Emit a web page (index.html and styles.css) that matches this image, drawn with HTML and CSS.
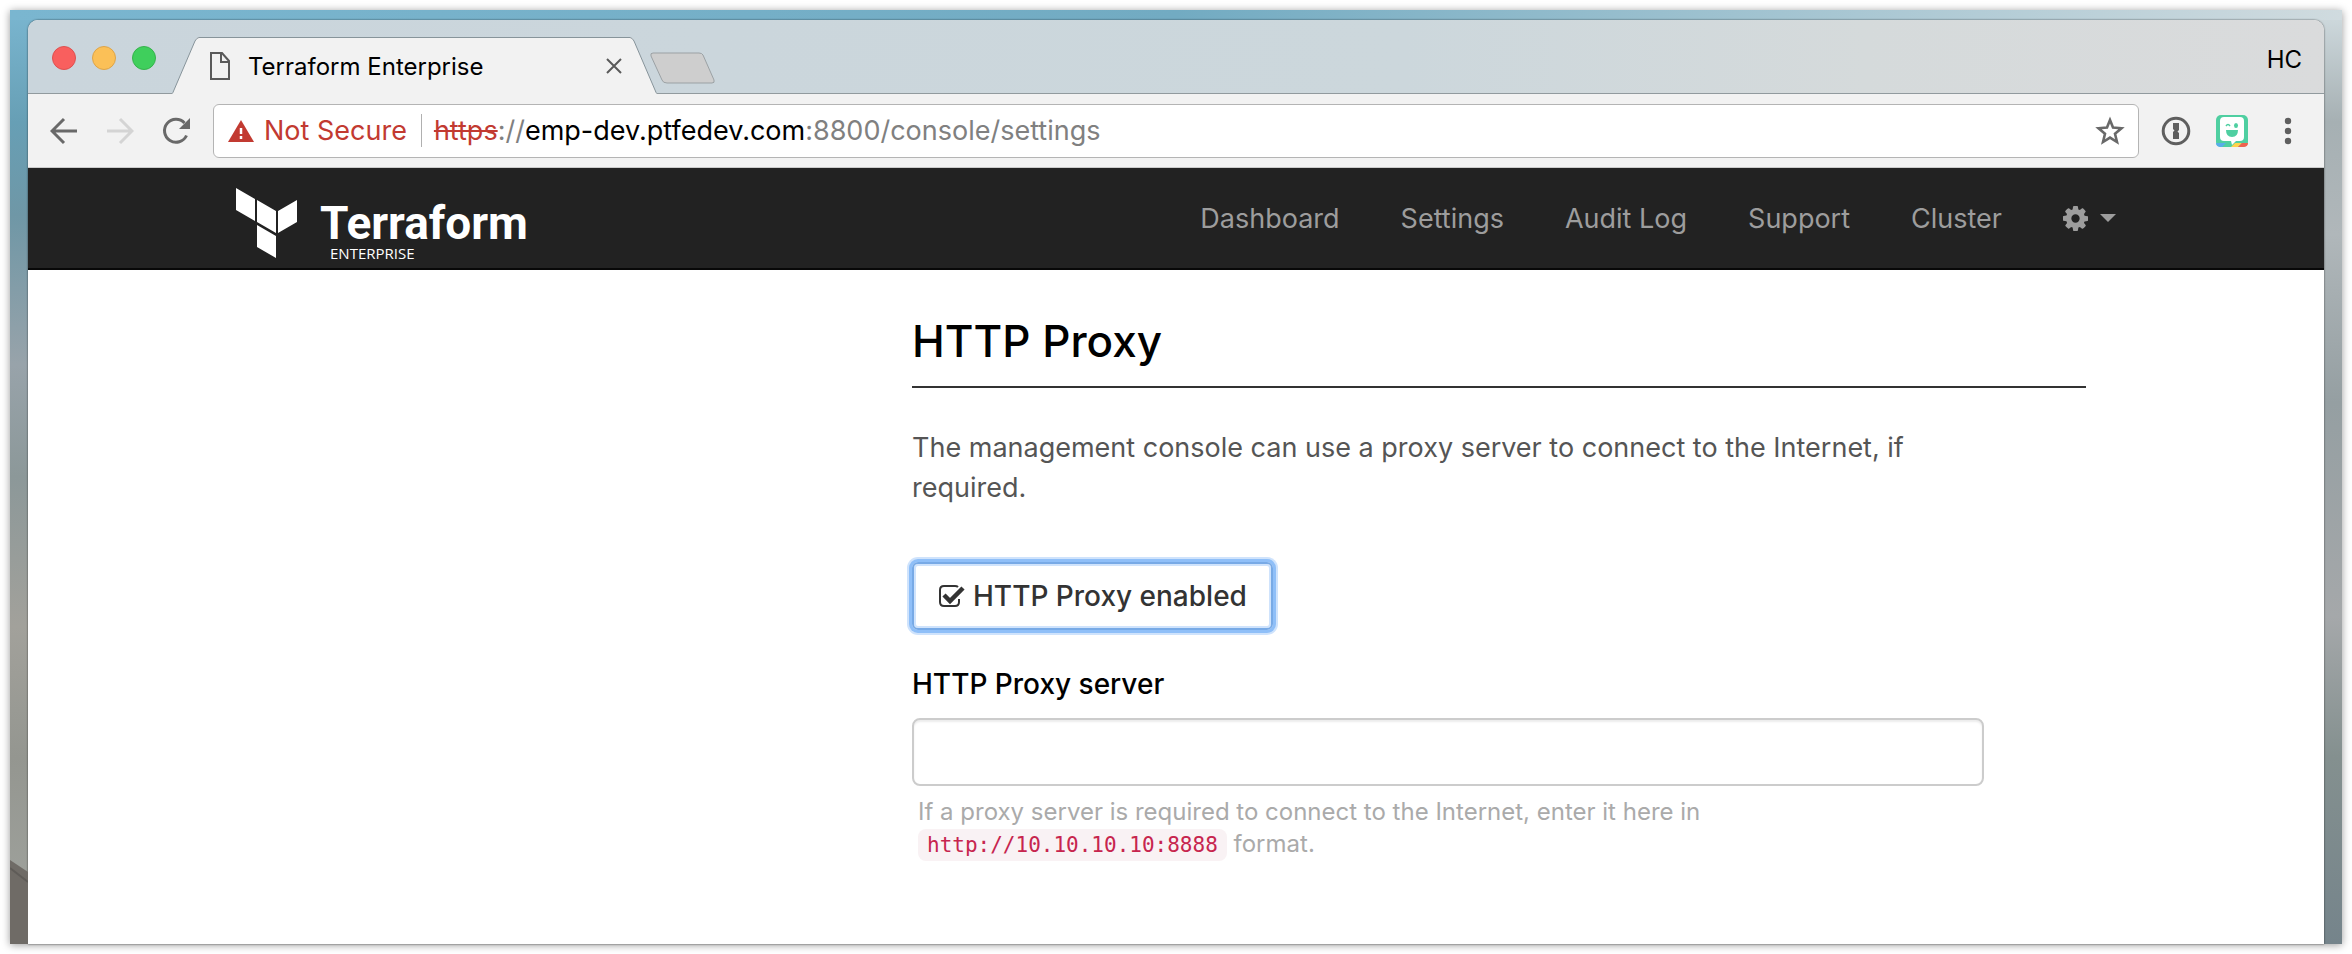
FILE: index.html
```html
<!DOCTYPE html>
<html lang="en">
<head>
<meta charset="utf-8">
<title>Terraform Enterprise</title>
<link rel="stylesheet" href="styles.css">
</head>
<body>
<div class="desktop">
  <svg class="rock" viewBox="0 0 18 84" aria-hidden="true"><path d="M0 0L18 12V84H0Z" fill="#6f6b66"/><path d="M0 8L18 22" stroke="#5f5c58" stroke-width="2"/></svg>
  <div class="window">
    <header class="tabstrip">
      <div class="lights">
        <button class="light close" aria-label="Close window"></button>
        <button class="light minimize" aria-label="Minimize window"></button>
        <button class="light expand" aria-label="Expand window"></button>
      </div>
      <div class="tab">
        <svg class="tab-edge" viewBox="0 0 27 57" aria-hidden="true"><path d="M0 57Q1 56 2 53L23 4Q25 0 27 0V57Z" fill="#f2f2f2"/><path d="M0 56.500Q1 56 2 53L23 4Q25 .5 27 .5" fill="none" stroke="#87949a"/></svg>
        <div class="tab-body">
          <svg width="20" height="28" viewBox="0 0 20 28" fill="none" stroke="#5a5a5a" stroke-width="2" aria-hidden="true"><path d="M1 1H12L19 9V27H1ZM11 1V10H19"/></svg>
          <span class="tab-title">Terraform Enterprise</span>
          <button class="icon-button" aria-label="Close tab"><svg width="16" height="16" viewBox="0 0 16 16" stroke="#5a5a5a" stroke-width="2" aria-hidden="true"><path d="M1 1L15 15M15 1L1 15"/></svg></button>
        </div>
        <svg class="tab-edge" viewBox="0 0 27 57" aria-hidden="true"><path d="M27 57Q26 56 25 53L4 4Q2 0 0 0V57Z" fill="#f2f2f2"/><path d="M27 56.500Q26 56 25 53L4 4Q2 .5 0 .5" fill="none" stroke="#87949a"/></svg>
      </div>
      <button class="new-tab" aria-label="New tab"><svg width="66" height="32" viewBox="0 0 66 32" aria-hidden="true"><path d="M3 1H49Q52 1 53 3L64 28Q65 31 62 31H17Q13 31 12 28L1 4Q0 1 3 1Z" fill="#cecece" stroke="#9ba1a4"/></svg></button>
      <button class="profile">HC</button>
    </header>
    <div class="toolbar">
      <div class="history">
        <button class="icon-button" aria-label="Back"><svg width="28" height="28" viewBox="0 0 28 28" fill="none" stroke="#696969" stroke-width="3" aria-hidden="true"><path d="M27 14H3M14 2L2 14L14 26"/></svg></button>
        <button class="icon-button" aria-label="Forward" disabled><svg width="28" height="28" viewBox="0 0 28 28" fill="none" stroke="#d4d4d4" stroke-width="3" aria-hidden="true"><path d="M1 14H25M14 2L26 14L14 26"/></svg></button>
        <button class="icon-button" aria-label="Reload"><svg width="28" height="28" viewBox="0 0 28 28" aria-hidden="true"><path d="M24.500 18.500A11.500 11.500 0 1 1 22.500 6" fill="none" stroke="#696969" stroke-width="3"/><path d="M28 1V12H17Z" fill="#696969"/></svg></button>
      </div>
      <div class="address">
        <svg width="26" height="22" viewBox="0 0 26 22" aria-hidden="true"><path d="M13 0L26 22H0Z" fill="#c23a31"/><path d="M13 8V14M13 16V19" stroke="#fff" stroke-width="2.500"/></svg>
        <span class="insecure">Not Secure</span>
        <div class="url" role="textbox" aria-label="Address"><s>https</s>://<b>emp-dev.ptfedev.com</b>:8800/console/settings</div>
        <button class="icon-button" aria-label="Bookmark"><svg width="30" height="30" viewBox="0 0 30 30" fill="none" stroke="#696969" stroke-width="2.600" aria-hidden="true"><path d="M15 4L18 11.500L26.500 12.200L20 17.700L22 26L15 21.600L8 26L10 17.700L3.500 12.200L12 11.500Z"/></svg></button>
      </div>
      <div class="extensions">
        <button class="icon-button" aria-label="Password manager"><svg width="30" height="30" viewBox="0 0 30 30" aria-hidden="true"><circle cx="15" cy="15" r="12.800" fill="none" stroke="#5f5f5f" stroke-width="3"/><path d="M12 7H18V14L16.500 15.500L18 17V23H12V16L13.500 14.500L12 13Z" fill="#5f5f5f"/></svg></button>
        <button class="icon-button" aria-label="Bitmoji"><svg width="32" height="32" viewBox="0 0 32 32" aria-hidden="true"><rect width="32" height="32" rx="5" fill="#4fcfa1"/><path d="M0 28H10L6 32H5Q0 32 0 28Z" fill="#58aee8"/><path d="M19 28H26L22 32H15Z" fill="#ffd34d"/><path d="M26 28H32Q32 32 27 32H22Z" fill="#f0614f"/><path d="M8 2H24Q28 2 28 6V22Q28 26 24 26H20L16 30L15 26H8Q4 26 4 22V6Q4 2 8 2Z" fill="#fff"/><path d="M10 15H22Q22 22 16 22T10 15Z" fill="#4fcfa1"/><ellipse cx="20" cy="10.500" rx="2" ry="2.500" fill="#4fcfa1"/><path d="M10 11Q12 8 14 11" fill="none" stroke="#4fcfa1" stroke-width="1.500"/></svg></button>
        <button class="icon-button" aria-label="Menu"><svg width="8" height="28" viewBox="0 0 8 28" fill="#5f5f5f" aria-hidden="true"><circle cx="4" cy="4" r="3.200"/><circle cx="4" cy="14" r="3.200"/><circle cx="4" cy="24" r="3.200"/></svg></button>
      </div>
    </div>
    <div class="navbar">
      <div class="container nav-row">
        <a class="brand" href="#">
          <svg width="62" height="70" viewBox="0 0 62 70" fill="#fff" aria-hidden="true"><path d="M0 0L19 11V33L0 22ZM21 12L40 23V45L21 34ZM42 23L61 12V34L42 45ZM21 37L40 48V70L21 59Z"/></svg>
          <span class="wordmark"><span class="product">Terraform</span><span class="edition">ENTERPRISE</span></span>
        </a>
        <nav class="links">
          <a href="#">Dashboard</a>
          <a href="#">Settings</a>
          <a href="#">Audit Log</a>
          <a href="#">Support</a>
          <a href="#">Cluster</a>
          <a class="gear" href="#" aria-label="Options">
            <svg width="25" height="25" viewBox="0 0 1536 1536" fill="currentColor" aria-hidden="true"><path d="M1024 768q0-106-75-181t-181-75-181 75-75 181 75 181 181 75 181-75 75-181zm512-109v222q0 12-8 23t-20 13l-185 28q-19 54-39 91 35 50 107 138 10 12 10 25t-9 23q-27 37-99 108t-94 71q-12 0-26-9l-138-108q-44 23-91 38-16 136-29 186-7 28-36 28H657q-14 0-24.500-8.500T621 1506l-28-184q-49-16-90-37l-141 107q-10 9-25 9-14 0-25-11-126-114-165-168-7-10-7-23 0-12 8-23 15-21 51-66.500t54-70.500q-27-50-41-99L29 913q-13-2-21-12.500T0 877V655q0-12 8-23t19-13l186-28q14-46 39-92-40-57-107-138-10-12-10-24 0-10 9-23 26-36 98.500-107.500T337 135q13 0 26 10l138 107q44-23 91-38 16-136 29-186 7-28 36-28h222q14 0 24.500 8.500T915 30l28 184q49 16 90 37l142-107q9-9 24-9 13 0 25 10 129 119 165 170 7 8 7 22 0 12-8 23-15 21-51 66.500t-54 70.500q26 50 41 98l183 28q13 2 21 12.500t8 23.500z"/></svg>
            <svg width="16" height="8" viewBox="0 0 16 8" fill="currentColor" aria-hidden="true"><path d="M0 0H16L8 8Z"/></svg>
          </a>
        </nav>
      </div>
    </div>
    <main class="container page">
      <section class="panel">
        <h1>HTTP Proxy</h1>
        <div class="fields">
          <p>The management console can use a proxy server to connect to the Internet, if required.</p>
          <label class="toggle">
            <input type="checkbox" checked>
            <svg width="27" height="24" viewBox="0 0 27 24" fill="none" aria-hidden="true"><path d="M21 15V18Q21 22 17 22H6Q2 22 2 18V6Q2 2 6 2H17Q19 2 20 3" stroke="#333" stroke-width="2"/><path d="M6 11L12 17L25 4" stroke="#333" stroke-width="4.500"/></svg>
            <span>HTTP Proxy enabled</span>
          </label>
          <label class="field-label" for="proxy">HTTP Proxy server</label>
          <input class="text" id="proxy" type="text" aria-describedby="proxy-help">
          <div class="help" id="proxy-help">If a proxy server is required to connect to the Internet, enter it here in <code>http://10.10.10.10:8888</code> format.</div>
        </div>
      </section>
    </main>
  </div>
</div>
</body>
</html>
```
FILE: styles.css
```css
* { box-sizing: border-box; }
body {
  margin: 0;
  padding: 10px;
  height: 100vh;
  overflow: hidden;
  background: #fff;
  color: #000;
  font-family: Inter, "Liberation Sans", sans-serif;
  font-size: 27px;
}
button { border: 0; padding: 0; background: none; font: inherit; color: inherit; }
svg { display: block; flex: none; }

.desktop {
  position: relative;
  height: 100%;
  padding: 10px 18px 0;
  box-shadow: 0 1px 8px rgba(0, 0, 0, .4);
  background:
    linear-gradient(90deg, #7ab6d0, #72abc2 50%, #d0dbdf) top / 100% 10px no-repeat,
    linear-gradient(#7ab6d0, #679fb5 12%, #6f97a6 22%, #98a3aa 38%, #8c9899 50%, #a2a19b 66%, #949690 80%, #a2a5a0) left / 50% 100% no-repeat,
    linear-gradient(#d0dbdf, #a6b0b3 12%, #b0b7ba 24%, #959fa2 42%, #a5a8aa 65%, #84908f 80%, #75848b) right / 50% 100% no-repeat;
}
.rock { position: absolute; left: 0; bottom: 0; width: 18px; height: 84px; }
.window {
  height: 100%;
  overflow: hidden;
  border-radius: 10px 10px 0 0;
  background: #fff;
  box-shadow: 0 0 2px rgba(0, 0, 0, .7);
}

.tabstrip {
  display: flex;
  align-items: flex-end;
  height: 74px;
  padding: 0 22px 0 24px;
  border-bottom: 1px solid #919a9e;
  background: linear-gradient(90deg, #cad5dc, #ccd7dc 60%, #d5dadb 80%, #dadbdc);
}
.lights { display: flex; gap: 16px; margin: 0 16px 23px 0; }
.light { width: 24px; height: 24px; border: 1px solid; border-radius: 50%; }
.close { background: #f95f5e; border-color: #dd5150; }
.minimize { background: #fbc057; border-color: #dda449; }
.expand { background: #3fcf5c; border-color: #36b34c; }
.tab { display: flex; margin-bottom: -1px; }
.tab-edge { width: 27px; height: 57px; }
.tab-body {
  display: flex;
  align-items: center;
  width: 431px;
  padding: 0 8px 0 11px;
  border-top: 1px solid #87949a;
  background: #f2f2f2;
  font-size: 24px;
}
.tab-title { flex: 1; margin-left: 18px; }
.icon-button { display: grid; place-items: center; flex: none; }
.new-tab { margin: 0 auto 9px -7px; }
.profile { align-self: center; padding-top: 6px; font-size: 24px; }

.toolbar {
  display: flex;
  align-items: center;
  height: 74px;
  padding: 0 32px 0 22px;
  border-bottom: 1px solid #cbcbcb;
  background: #f2f2f2;
}
.history { display: flex; gap: 28px; margin-right: 23px; }
.address {
  display: flex;
  flex: 1;
  align-items: center;
  height: 54px;
  padding: 0 13px 0 14px;
  border: 1px solid #b4b4b4;
  border-radius: 6px;
  background: #fff;
}
.insecure {
  margin-left: 10px;
  padding-right: 14px;
  border-right: 1px solid #b0b0b0;
  color: #c23a31;
}
.url { flex: 1; margin-left: 12px; color: #808080; }
.url s { color: #c23a31; }
.url b { font-weight: 400; color: #000; }
.extensions { display: flex; align-items: center; gap: 25px; margin-left: 22px; }
.extensions .icon-button:last-child { margin-left: 11px; }

.container { width: 100%; max-width: 1880px; margin: 0 auto; }
.navbar { height: 102px; border-bottom: 2px solid #080808; background: #222; }
.nav-row { display: flex; justify-content: space-between; }
.brand { display: flex; margin-top: 20px; gap: 22px; color: #fff; text-decoration: none; }
.wordmark { display: flex; flex-direction: column; }
.product { margin-top: 12px; font: 700 46px/46px Roboto, sans-serif; }
.edition { margin-left: 10px; font: 15px/15px "Open Sans", sans-serif; }
.links { display: flex; gap: 61px; height: 100px; align-items: center; }
.links a { color: #9d9d9d; text-decoration: none; }
.links .gear { display: flex; align-items: center; gap: 12px; }

.page { padding: 40px 30px 0 0; }
.panel { margin-left: 676px; }
h1 {
  margin: 0 0 40px;
  padding-bottom: 14px;
  border-bottom: 2px solid #333;
  font-size: 44px;
  font-weight: 500;
  line-height: 62px;
}
.fields { max-width: 1072px; }
p { margin: 0; color: #555; line-height: 40px; }
.toggle {
  display: flex;
  align-items: center;
  gap: 8px;
  width: fit-content;
  height: 68px;
  margin: 54px 0 34px;
  padding: 0 24px;
  border: 2px solid #78aae6;
  border-radius: 6px;
  box-shadow: 0 0 0 3px #8fbff8, 0 0 0 5px #cfe3fc, inset 0 0 0 2px #cfe3fc;
  color: #333;
  font-size: 28px;
  font-weight: 500;
}
.toggle input { position: absolute; opacity: 0; }
.field-label { display: block; margin-bottom: 14px; font-size: 28px; font-weight: 500; line-height: 40px; }
.text {
  display: block;
  width: 100%;
  height: 68px;
  padding: 0 24px;
  border: 2px solid #ccc;
  border-radius: 8px;
  box-shadow: inset 0 2px 2px rgba(0, 0, 0, .08);
  font: inherit;
}
.help { margin: 10px 6px 0; color: #aaa; font-size: 24px; line-height: 32px; }
code {
  padding: 4px 9px;
  border-radius: 8px;
  background: #f9f2f4;
  color: #c7254e;
  font-family: "DejaVu Sans Mono", monospace;
  font-size: 21px;
}
```
